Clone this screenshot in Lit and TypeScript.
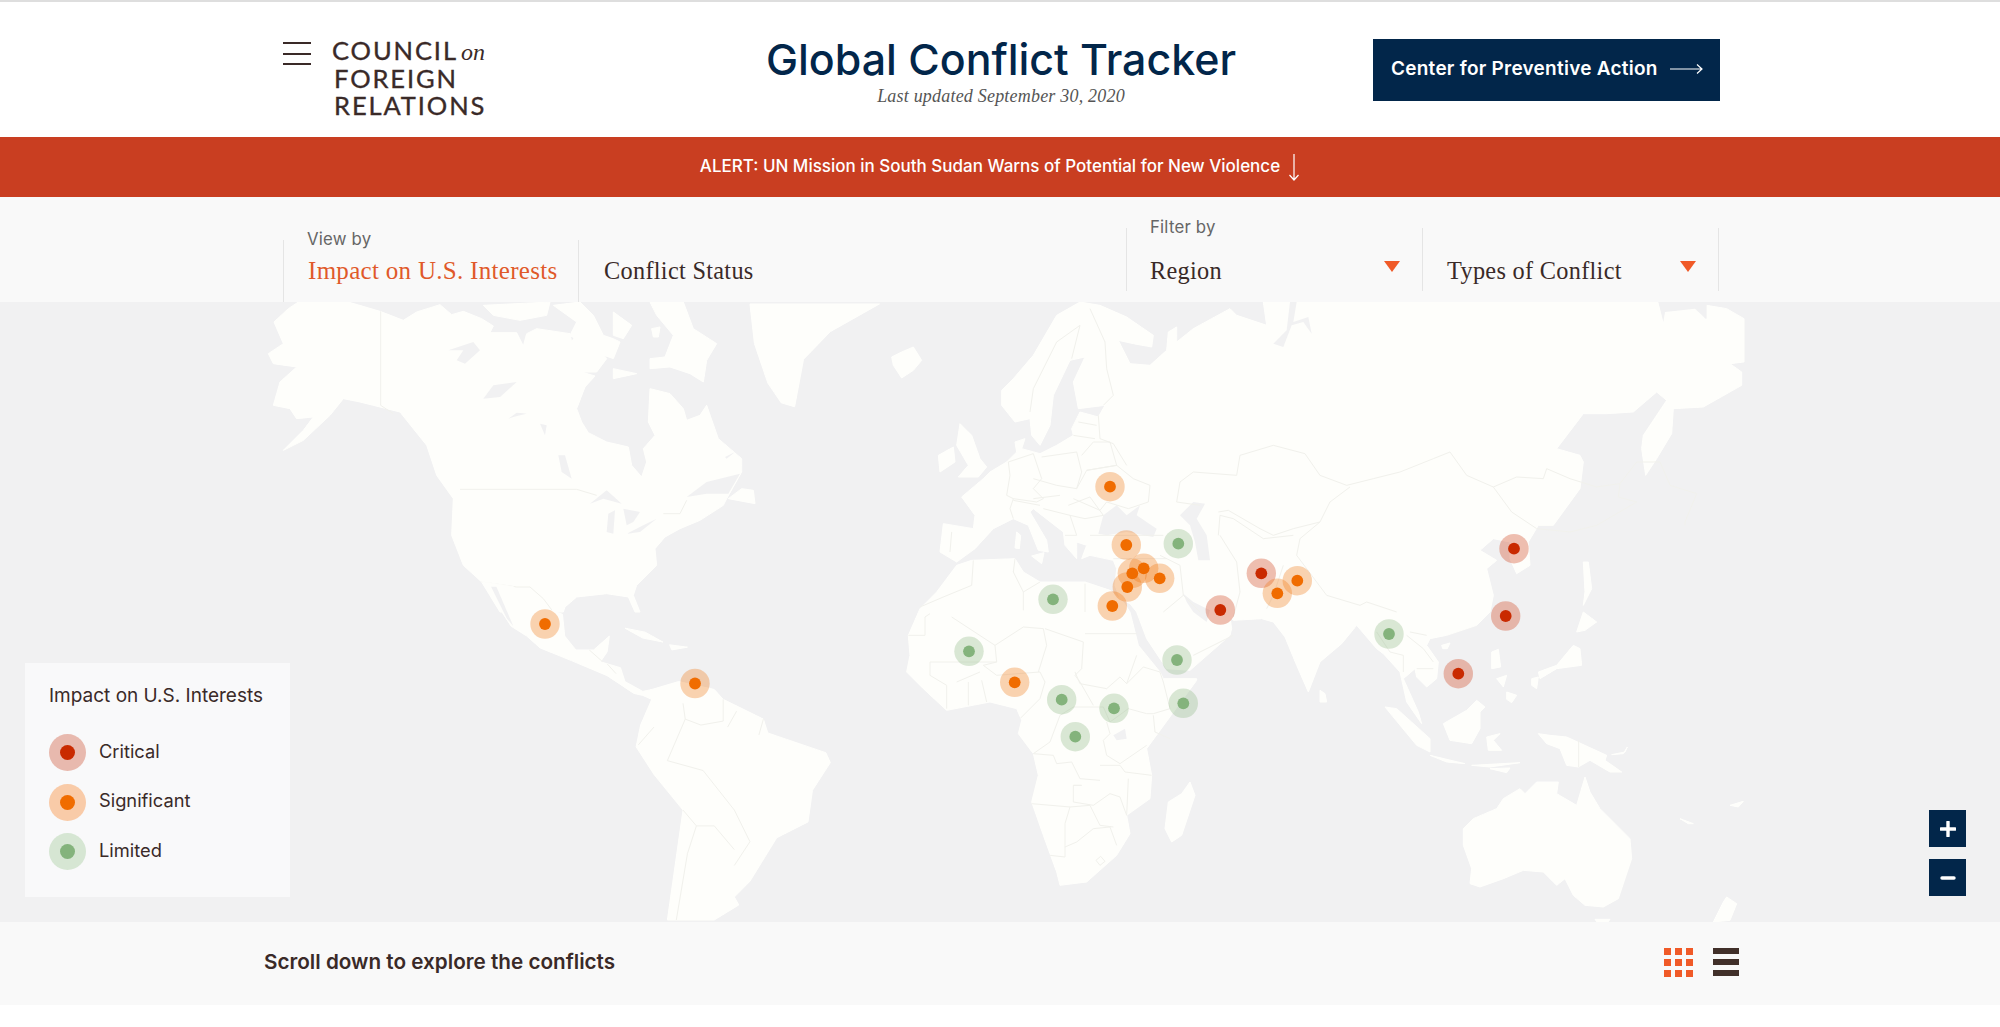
import { LitElement, html, css, svg } from "lit";
import { customElement } from "lit/decorators.js";

const Z9 = "translate(900 302) scale(.33333)";
const Z8 = "translate(260 302) scale(.33333)";
const Z6 = "translate(250 300) scale(.4464 .3954)";
const Z11 = "translate(880 612) scale(.33333)";
const Z12 = "translate(1290 612) scale(.33333)";

const landZ8 = [
  "M42,60 L85,20 L115,0 L265,0 L360,28 L430,55 L470,30 L540,8 L575,38 L610,28 L665,50 L700,72 L690,92 L770,92 L790,132 L800,95 L830,80 L930,95 L935,120 L950,95 L1005,125 L1040,170 L1010,210 L965,210 L1005,222 L975,255 L950,320 L965,360 L985,392 L1040,420 L1105,435 L1115,490 L1145,525 L1160,480 L1150,440 L1185,400 L1165,360 L1170,260 L1230,275 L1270,320 L1280,355 L1320,340 L1340,310 L1375,410 L1445,470 L1445,510 L1400,590 L1390,610 L1320,655 L1260,680 L1215,705 L1185,740 L1190,790 L1130,850 L1120,880 L1140,930 L1125,930 L1105,885 L1040,875 L950,885 L915,915 L910,930 L720,930 L665,840 L610,790 L575,700 L580,590 L530,520 L500,430 L420,330 L360,315 L300,300 L250,290 L210,340 L130,415 L70,445 L130,385 L160,345 L110,350 L90,320 L40,310 L60,240 L110,195 L40,185 L25,155 L70,125 Z",
  "M670,10 L870,0 L860,40 L780,55 L700,40 Z",
  "M880,10 L960,0 L1000,40 L1030,100 L1060,110 L1080,120 L1060,170 L1005,150 L930,100 L950,60 Z",
  "M1060,30 L1115,70 L1090,110 L1060,100 Z",
  "M1170,0 L1270,0 L1300,80 L1370,125 L1340,175 L1330,240 L1290,215 L1230,195 L1170,200 L1170,170 L1215,165 L1240,100 L1190,40 Z",
  "M1060,200 L1130,215 L1060,230 Z",
  "M1445,560 L1480,565 L1485,605 L1405,590 Z",
  "M1175,80 L1200,75 L1195,105 L1180,105 Z",
];
const waterZ8 = [
  "M565,145 L640,120 L660,145 L615,185 L590,175 L610,145 Z",
  "M670,290 L700,250 L770,240 L720,285 Z",
  "M745,350 L770,332 L800,335 L760,345 Z",
  "M840,365 L860,370 L855,400 Z",
  "M895,460 L915,460 L935,530 L905,510 Z",
  "M990,605 L1040,565 L1085,605 L1030,590 Z",
  "M1045,635 L1065,625 L1060,695 L1040,690 Z",
  "M1090,620 L1140,630 L1120,660 L1100,670 Z",
  "M1100,695 L1150,670 L1190,650 L1140,690 Z",
  "M1280,585 L1340,540 L1440,515 L1405,575 L1340,575 Z",
  "M1395,465 L1425,450 L1400,470 Z",
];
const landZ6 = [
  "M520,712 L590,725 L640,770 L700,795 L705,850 L730,885 L770,885 L805,850 L800,890 L785,915 L830,930 L840,965 L880,990 L900,985 L960,965 L1040,985 L1060,1010 L1150,1060 L1160,1095 L1290,1145 L1300,1170 L1260,1240 L1250,1320 L1180,1360 L1120,1470 L1085,1510 L1095,1530 L1040,1568 L935,1568 L970,1290 L905,1200 L865,1130 L875,1075 L900,1010 L880,1000 L860,995 L800,950 L720,912 L650,880 L620,850 L585,825 Z",
  "M1120,10 L1410,10 L1300,80 L1240,150 L1220,270 L1190,260 L1160,210 L1130,110 Z",
  "M840,830 L885,840 L925,865 L880,855 Z",
  "M940,872 L980,878 L945,885 Z",
];
const waterZ6 = ["M540,725 L552,725 L590,825 L575,805 Z"];
const landZ9 = [
  "M540,0 L600,10 L680,45 L760,100 L755,135 L700,125 L655,115 L690,185 L750,190 L800,145 L805,90 L830,75 L830,120 L880,80 L990,20 L1010,40 L1100,70 L1090,0 L2275,0 L2290,60 L2295,30 L2385,20 L2420,55 L2420,10 L2480,20 L2532,50 L2532,180 L2490,185 L2525,210 L2525,250 L2410,315 L2320,320 L2315,395 L2270,470 L2237,520 L2225,440 L2230,400 L2330,250 L2300,295 L2270,270 L2200,330 L2120,335 L2050,335 L1970,440 L2040,460 L2050,480 L2040,560 L1960,670 L1915,670 L1885,720 L1890,790 L1850,815 L1830,770 L1830,720 L1780,710 L1740,745 L1790,775 L1760,800 L1780,880 L1770,930 L1730,970 L1640,1000 L1590,1010 L1580,1030 L1615,1080 L1610,1130 L1580,1155 L1550,1125 L1545,1100 L1510,1130 L1555,1230 L1565,1265 L1520,1200 L1500,1110 L1450,1055 L1430,1040 L1370,970 L1325,1025 L1260,1080 L1225,1170 L1190,1090 L1155,1005 L1120,960 L1085,950 L1000,955 L990,945 L995,980 L990,1000 L870,1105 L800,1100 L740,1010 L710,930 L690,905 L660,890 L645,850 L650,800 L640,775 L570,760 L545,770 L560,730 L530,720 L530,770 L495,730 L490,690 L400,620 L390,630 L440,715 L445,750 L415,745 L385,670 L340,650 L280,680 L225,740 L170,780 L120,750 L130,665 L220,680 L225,640 L185,585 L250,530 L270,510 L320,480 L350,450 L345,420 L375,410 L365,440 L420,455 L470,430 L520,400 L515,380 L540,330 L595,345 L615,310 L535,320 L520,240 L555,165 L510,175 L460,280 L450,370 L420,430 L395,400 L390,350 L345,360 L305,310 L305,265 L340,230 L400,160 L470,40 Z",
  "M-25,165 L5,150 L40,135 L65,175 L40,205 L5,228 L-20,190 Z",
  "M180,365 L215,400 L240,470 L260,495 L235,525 L175,525 L205,490 L170,430 Z",
  "M115,460 L160,435 L165,480 L120,510 Z",
  "M395,762 L432,752 L425,785 Z",
  "M350,690 L362,700 L358,740 L345,738 Z",
  "M170,790 L215,775 L345,770 L370,810 L420,840 L555,840 L630,865 L670,900 L690,930 L715,1030 L780,1110 L790,1130 L890,1130 L890,1135 L740,1340 L755,1420 L750,1490 L680,1540 L690,1595 L650,1660 L560,1740 L480,1750 L470,1710 L430,1600 L395,1500 L415,1420 L400,1355 L355,1295 L365,1255 L350,1220 L270,1200 L140,1225 L70,1160 L20,1110 L30,1060 L25,1000 L60,920 L110,870 Z",
  "M870,1440 L885,1480 L845,1600 L815,1620 L795,1580 L805,1500 L845,1475 Z",
  "M2050,780 L2065,780 L2075,860 L2050,910 L2055,870 Z",
  "M2050,930 L2090,960 L2055,985 L2030,990 Z",
  "M2040,1040 L2045,1090 L1970,1100 L1920,1130 L1915,1110 L1970,1090 L2020,1030 Z",
  "M1895,1130 L1915,1125 L1910,1160 L1895,1150 Z",
];
const waterZ9 = [
  "M595,695 L610,640 L650,610 L680,640 L720,610 L710,640 L770,680 L760,705 L680,690 L620,700 Z",
  "M840,640 L880,600 L915,605 L890,650 L920,700 L930,775 L895,775 L885,720 L870,670 Z",
  "M850,875 L880,900 L930,925 L920,960 L880,930 L860,900 Z",
  "M1170,0 L1190,0 L1180,60 L1225,45 L1235,95 L1210,60 L1175,70 L1150,135 L1120,125 L1160,85 Z",
  "M2275,0 L2420,0 L2420,50 L2385,20 L2295,30 L2290,60 Z",
];
const waterZ11 = ["M700,370 L735,350 L740,380 L710,385 Z"];
const landZ12 = [
  "M455,100 L480,93 L472,110 L458,110 Z",
  "M605,120 L625,112 L632,165 L605,170 Z",
  "M650,240 L680,250 L665,272 L650,262 Z",
  "M620,200 L650,190 L640,225 Z",
  "M90,235 L105,245 L110,270 L90,270 Z",
  "M460,335 L530,295 L560,265 L585,285 L570,300 L570,350 L545,395 L480,385 Z",
  "M590,375 L630,365 L610,385 L635,415 L595,415 Z",
  "M285,285 L320,290 L420,380 L420,420 L380,400 Z",
  "M420,430 L525,455 L470,450 Z",
  "M545,460 L690,452 L600,465 Z",
  "M600,470 L660,468 L650,482 Z",
  "M745,365 L780,370 L830,375 L950,430 L945,445 L995,480 L960,480 L900,445 L865,465 L830,460 L810,410 L770,395 Z",
  "M520,650 L550,620 L620,590 L640,560 L690,530 L705,545 L740,510 L805,510 L800,545 L860,580 L885,495 L900,540 L930,590 L1020,680 L1025,740 L985,860 L940,885 L885,880 L850,850 L825,800 L800,820 L760,780 L700,775 L640,800 L570,825 L540,815 L545,770 L520,700 Z",
  "M915,922 L960,922 L950,935 L925,935 Z",
  "M1300,870 L1310,855 L1340,875 L1320,925 L1270,930 Z",
  "M1170,620 L1210,635 L1195,635 Z",
  "M1320,580 L1360,568 L1345,585 Z",
  "M965,428 L1005,420 L1012,405 L1000,425 Z",
];
const bordersZ8 = [
  "M362,28 L362,310 L400,335",
  "M600,562 L950,562 L1010,580",
  "M1210,635 L1260,635 L1280,595",
  "M665,840 L770,855 L810,855 L850,890 L880,930",
];
const bordersZ6 = [
  "M935,1165 L1015,1190 L1085,1290 L1120,1370 L1085,1430",
  "M970,1020 L975,1060 L935,1165",
  "M905,1080 L870,1125",
  "M1060,1010 L1060,1065 L1010,1075 L975,1060",
  "M1150,1060 L1140,1100",
  "M1090,1040 L1070,1080",
  "M970,1290 L1000,1330 L980,1400 L955,1568",
  "M1000,1330 L1040,1330 L1085,1390",
  "M760,885 L790,915 M800,920 L820,945",
];
const bordersZ9 = [
  "M325,480 L400,455 L425,530 L400,560 L430,590 L410,600 L340,590 L320,580 L330,520 Z",
  "M425,465 L530,450 L545,510 L530,560 L470,550 L400,530",
  "M545,460 L580,420 L630,420 L650,490 L560,505",
  "M530,560 L560,505 L650,490 L700,530 L750,550 L745,600 L685,620 L620,600 L600,625 L520,590",
  "M505,610 L570,585 L610,640 L555,650 L510,640",
  "M155,690 L150,750",
  "M340,590 L330,620 L340,650",
  "M340,595 L420,610 M400,590 L480,580",
  "M430,620 L510,640 L530,700 L495,700",
  "M540,70 L470,120 L400,260 L390,330",
  "M540,70 L515,170",
  "M570,20 L615,120 L620,200 L640,280 L610,310",
  "M535,360 L590,370 M520,400 L585,410",
  "M595,340 L600,410 L640,425 L680,490",
  "M840,540 L880,510 L1010,520 L1020,460 L1120,430 L1215,455 L1260,520 L1340,550 L1420,530 L1500,510 L1600,470 L1650,450 L1700,520 L1780,555 L1850,525 L1930,530 L1940,500 L2010,530 L2090,555 L2160,545 L2210,480 L2280,480 L2310,550 L2390,575 L2355,660 L2355,670",
  "M1780,555 L1835,630 L1910,680 L2010,690 L2090,670 L2210,600 L2155,585 L2160,545",
  "M840,540 L830,600 L900,610",
  "M955,630 L985,625 L1080,680 L1120,700 L1180,680 L1260,660 L1290,600 L1350,555",
  "M1180,700 L1090,710 L1000,650 L960,640 L955,700",
  "M1260,660 L1200,710 L1190,760 L1280,880 L1380,910 L1400,900 L1490,930",
  "M780,760 L840,790 L850,880",
  "M960,700 L1010,780 L1020,870 L1000,945",
  "M570,700 L790,700 M640,770 L800,770",
  "M1150,790 L1120,880 L1100,920",
  "M790,930 L850,880 L900,930",
  "M880,1060 L1000,1000",
  "M220,775 L215,850 L130,885 L60,915",
  "M345,770 L340,810 L370,870 L370,925",
  "M555,845 L555,930",
  "M420,840 L370,870",
];
const bordersZ11 = [
  "M85,70 L135,70 L135,15 L150,5",
  "M215,15 L345,100 L350,150 L150,150",
  "M345,100 L430,45 L490,50 L500,100 L475,180",
  "M350,150 L310,160 L350,190 L480,180 L495,210 L480,260 L420,320",
  "M495,50 L610,90 L605,170 L585,190 L600,210 L640,280",
  "M615,65 L770,65",
  "M585,180 L600,215 L680,230 L720,195 L740,215 L770,130",
  "M740,215 L790,165 L840,180 L850,210 L870,290 L820,305 L800,305 L745,290 L690,330 L670,285 L580,285 L540,310 L510,390 L460,425",
  "M820,310 L825,360 L870,380",
  "M680,330 L690,365 L670,385 L680,430 L720,455 L800,400",
  "M460,425 L520,430 L530,455 L575,450 L600,500 L660,505",
  "M660,460 L720,460 L735,480 L815,490",
  "M580,520 L605,520 L580,520 L580,570 L640,580 L690,545 L720,555",
  "M455,575 L570,585 L630,580 L660,640 L700,645",
  "M570,585 L555,635 L555,700",
  "M555,705 L590,690 L640,650 L690,645 L710,700",
  "M510,730 L555,735 L555,700",
  "M720,555 L740,610 L745,500",
  "M150,150 L150,190 L200,220 L200,290",
  "M265,210 L265,280",
  "M305,205 L320,270",
  "M230,210 L300,180",
  "M648,745 L662,733 L675,748 L660,760 Z",
];
const bordersZ12 = [
  "M260,60 L300,120 L340,130 L340,180",
  "M350,70 L400,110 L430,150",
  "M380,170 L430,170",
  "M866,385 L866,465",
  "M360,60 L410,70",
];

type Level = "critical" | "significant" | "limited";
const markers: [number, number, Level][] = [
  [545, 624, "significant"],
  [695, 683.5, "significant"],
  [1110, 486.7, "significant"],
  [1126.3, 545, "significant"],
  [1178.3, 543.7, "limited"],
  [1143.7, 568.3, "significant"],
  [1132.3, 573.3, "significant"],
  [1159.7, 578.3, "significant"],
  [1127.3, 587, "significant"],
  [1112.3, 606, "significant"],
  [1053, 599.3, "limited"],
  [1261.3, 573.3, "critical"],
  [1277.3, 593.3, "significant"],
  [1297.3, 580.7, "significant"],
  [1220.3, 610, "critical"],
  [1514, 548.7, "critical"],
  [1505.7, 616, "critical"],
  [1458.3, 673.7, "critical"],
  [1389, 634, "limited"],
  [969, 651.3, "limited"],
  [1014.7, 682.3, "significant"],
  [1177, 660, "limited"],
  [1061.7, 699.7, "limited"],
  [1114, 708.3, "limited"],
  [1183.3, 703.3, "limited"],
  [1075.3, 736.7, "limited"],
];

const paths = (list: string[], cls: string) =>
  list.map((d) => svg`<path class=${cls} d=${d}></path>`);

@customElement("app-root")
export class AppRoot extends LitElement {
  static styles = css`
    :host { display: block; width: 2000px; height: 1027px; overflow: hidden; background: #fff; color: #3a2a28; font-family: Inter, "Open Sans", sans-serif; }
    header { box-sizing: border-box; height: 137px; border-top: 2px solid #dedede; display: grid; grid-template-columns: 346px 1fr 347px; padding: 0 280px 0 283px; background: #fff; }
    .brand { display: flex; gap: 21px; padding-top: 35px; align-items: flex-start; }
    .burger { width: 28px; height: 23px; margin-top: 5px; display: flex; flex-direction: column; justify-content: space-between; }
    .burger span { height: 2px; background: #3a2a28; display: block; }
    .logo { font-family: Lato, sans-serif; font-size: 25.5px; line-height: 27.5px; letter-spacing: 1.9px; color: #3a2a28; white-space: nowrap; font-weight: 400; -webkit-text-stroke: .35px #3a2a28; }
    .logo div:nth-child(n+2) { padding-left: 2px; }
    .logo i { font-family: "Liberation Serif", serif; font-size: 24px; line-height: 0; letter-spacing: 0; margin-left: 3px; -webkit-text-stroke: 0; }
    .center { text-align: center; padding-top: 32px; }
    h1 { margin: 0; font-size: 42.9px; line-height: 50px; font-weight: 500; color: #02264a; white-space: nowrap; }
    .updated { font-family: "Liberation Serif", serif; font-style: italic; font-size: 18px; letter-spacing: .2px; line-height: 20px; color: #555; margin-top: 2px; }
    .cta { align-self: start; margin-top: 37px; height: 62px; box-sizing: border-box; padding-bottom: 3px; background: #02264a; color: #fff; display: flex; align-items: center; padding-left: 18px; gap: 12px; font-size: 19px; letter-spacing: .25px; font-weight: 600; white-space: nowrap; }
    .alert { height: 60px; box-sizing: border-box; padding-bottom: 2px; background: #c93e21; color: #fff; display: flex; align-items: center; justify-content: center; gap: 8px; font-size: 17px; font-weight: 500; }
    .alert svg { margin-top: 2px; }
    .filters { box-sizing: border-box; height: 105px; background: #f9f9f9; padding: 0 280px 0 283px; display: grid; grid-template-columns: 295px 548px 296px 297px; }
    .cell { border-left: 1px solid #e5e5e5; position: relative; padding-left: 24px; white-space: nowrap; margin-top: 43px; }
    .cell.wide { padding-left: 25px; }
    .cell.f { margin-top: 31px; margin-bottom: 11px; padding-left: 23px; }
    .cell.last { border-right: 1px solid #e5e5e5; padding-left: 24px; }
    .small { position: absolute; left: 23px; top: -11px; font-size: 16.8px; letter-spacing: .2px; line-height: 20px; color: #666; }
    .val { font-family: "Liberation Serif", serif; font-size: 24.3px; letter-spacing: .3px; line-height: 28px; margin-top: 17px; color: #3a2a28; }
    .cell.f .val { margin-top: 29px; }
    .val.on { color: #e0592a; font-size: 25px; }
    .tri { position: absolute; top: 33px; right: 22px; width: 0; height: 0; border-left: 8px solid transparent; border-right: 8px solid transparent; border-top: 11px solid #f05a28; }
    .map { position: relative; height: 620px; background: #f1f1f2; overflow: hidden; }
    .map > svg { display: block; }
    .geo { filter: blur(.45px); }
    .land { fill: #fefefb; stroke: #fefefb; stroke-width: 1; stroke-linejoin: round; vector-effect: non-scaling-stroke; }
    .water { fill: #f1f1f2; stroke: none; }
    .border { fill: none; stroke: #f1f1ec; stroke-width: 1; vector-effect: non-scaling-stroke; stroke-linejoin: round; }
    .legend { position: absolute; left: 25px; top: 361px; width: 265px; height: 234px; box-sizing: border-box; background: #f9f9fa; padding: 21px 24px; }
    .legend h2 { margin: 0 0 26px; font-size: 19px; line-height: 24px; font-weight: 400; color: #3a2a28; white-space: nowrap; }
    .row { display: flex; align-items: center; gap: 13px; height: 37px; margin-bottom: 12.5px; font-size: 18.3px; }
    .row span { position: relative; top: -2px; }
    .dot { width: 37px; height: 37px; display: block; flex: none; }
    .zoom { position: absolute; left: 1929px; top: 508px; display: flex; flex-direction: column; gap: 12px; }
    .zoom div { width: 37px; height: 37px; background: #02264a; display: flex; align-items: center; justify-content: center; }
    .bar { box-sizing: border-box; height: 83px; background: #f9f9f9; padding: 0 261px 0 264px; display: flex; align-items: center; justify-content: space-between; }
    .bar strong { font-size: 20.7px; color: #3a2a28; font-weight: 600; position: relative; top: -2px; }
    .views { display: flex; gap: 20px; align-items: center; position: relative; top: -1px; }
    .grid9 { display: grid; grid-template-columns: repeat(3, 7.4px); gap: 3.6px; }
    .grid9 i { display: block; height: 7.4px; background: #f05a28; }
    .list3 { display: flex; flex-direction: column; gap: 5px; width: 26px; }
    .list3 i { display: block; height: 6px; background: #41302a; }
  `;

  dot(level: Level) {
    return html`<svg class="dot" viewBox="0 0 37 37"><circle cx="18.5" cy="18.5" r="18.5" fill=${level === "critical" ? "#e8b9ae" : level === "significant" ? "#f9cba8" : "#d6e6d3"}></circle><circle cx="18.5" cy="18.5" r="7.5" fill=${level === "critical" ? "#c92a00" : level === "significant" ? "#f06c00" : "#84b37c"}></circle></svg>`;
  }

  render() {
    const inner = { critical: "#c92a00", significant: "#f06c00", limited: "#84b37c" };
    return html`
      <header>
        <div class="brand">
          <div class="burger"><span></span><span></span><span></span></div>
          <div class="logo"><div>COUNCIL<i>on</i></div><div>FOREIGN</div><div>RELATIONS</div></div>
        </div>
        <div class="center">
          <h1>Global Conflict Tracker</h1>
          <div class="updated">Last updated September 30, 2020</div>
        </div>
        <div class="cta">Center for Preventive Action
          <svg width="33" height="12" viewBox="0 0 33 12"><path d="M0 6H32M27 1.5L32 6L27 10.5" fill="none" stroke="#fff" stroke-width="1.2"></path></svg>
        </div>
      </header>
      <div class="alert">ALERT: UN Mission in South Sudan Warns of Potential for New Violence
        <svg width="12" height="28" viewBox="0 0 12 28"><path d="M6 1V27M1.5 22L6 27L10.5 22" fill="none" stroke="#fff" stroke-width="1.2"></path></svg>
      </div>
      <div class="filters">
        <div class="cell"><div class="small">View by</div><div class="val on">Impact on U.S. Interests</div></div>
        <div class="cell wide"><div class="val">Conflict Status</div></div>
        <div class="cell f"><div class="small">Filter by</div><div class="val">Region</div><div class="tri"></div></div>
        <div class="cell f last"><div class="val">Types of Conflict</div><div class="tri"></div></div>
      </div>
      <div class="map">
        <svg width="2000" height="620" viewBox="0 302 2000 620">
          <g class="geo">
            <g transform=${Z8}>${paths(landZ8, "land")}${paths(waterZ8, "water")}${paths(bordersZ8, "border")}</g>
            <g transform=${Z6}>${paths(landZ6, "land")}${paths(waterZ6, "water")}${paths(bordersZ6, "border")}</g>
            <g transform=${Z9}>${paths(landZ9, "land")}${paths(waterZ9, "water")}${paths(bordersZ9, "border")}</g>
            <g transform=${Z11}>${paths(waterZ11, "water")}${paths(bordersZ11, "border")}</g>
            <g transform=${Z12}>${paths(landZ12, "land")}${paths(bordersZ12, "border")}</g>
          </g>
          ${markers.map(([x, y, l]) => svg`<circle cx=${x} cy=${y} r="14.7" fill=${inner[l]} fill-opacity=".3"></circle><circle cx=${x} cy=${y} r="5.9" fill=${inner[l]}></circle>`)}
        </svg>
        <div class="legend">
          <h2>Impact on U.S. Interests</h2>
          <div class="row">${this.dot("critical")}<span>Critical</span></div>
          <div class="row">${this.dot("significant")}<span>Significant</span></div>
          <div class="row">${this.dot("limited")}<span>Limited</span></div>
        </div>
        <div class="zoom">
          <div><svg width="16" height="16" viewBox="0 0 16 16"><path d="M8 1V15M1 8H15" stroke="#fff" stroke-width="3.4" stroke-linecap="round"></path></svg></div>
          <div><svg width="16" height="16" viewBox="0 0 16 16"><path d="M2 8H14" stroke="#fff" stroke-width="3.4" stroke-linecap="round"></path></svg></div>
        </div>
      </div>
      <div class="bar">
        <strong>Scroll down to explore the conflicts</strong>
        <div class="views">
          <div class="grid9">${Array.from({ length: 9 }, () => html`<i></i>`)}</div>
          <div class="list3"><i></i><i></i><i></i></div>
        </div>
      </div>
    `;
  }
}
